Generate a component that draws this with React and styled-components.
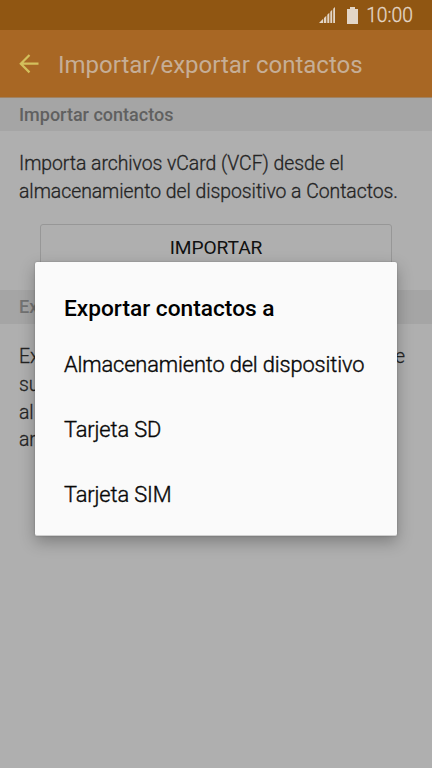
import React from 'react';
import styled, { createGlobalStyle } from 'styled-components';

const GlobalStyle = createGlobalStyle`
  * {
    box-sizing: border-box;
  }

  body {
    margin: 0;
    background-color: #afafaf;
    font-family: Roboto, 'Liberation Sans', sans-serif;
  }
`;

const Screen = styled.div`
  position: relative;
  height: 768px;
  overflow: hidden;
  background-color: #afafaf;
`;

const StatusBar = styled.div`
  display: flex;
  justify-content: flex-end;
  align-items: center;
  height: 30px;
  padding-right: 19px;
  background-color: #905612;
  color: #e3d6c7;
`;

const Clock = styled.span`
  margin-left: 8px;
  padding-top: 2px;
  font-size: 19.3px;
  font-weight: 300;
  line-height: 30px;
  -webkit-text-stroke: 0.3px currentColor;
`;

const SignalIcon = styled.svg`
  width: 17px;
  height: 17px;
  margin-right: 11px;
`;

const BatteryIcon = styled.svg`
  width: 11px;
  height: 17px;
`;

const Header = styled.header`
  display: flex;
  align-items: center;
  height: 68px;
  padding-left: 19px;
  background-color: #a86724;
  border-bottom: 1px solid #a08262;
`;

const BackIcon = styled.svg`
  width: 20px;
  height: 20px;
  margin-right: 19px;
`;

const Title = styled.h1`
  margin: 2px 0 0;
  color: #c6ae96;
  font-size: 24px;
  font-weight: 400;
  white-space: nowrap;
`;

const SectionTitle = styled.h2`
  height: ${(props) => props.$height}px;
  margin: 0;
  padding-left: 19px;
  background-color: #a5a5a5;
  color: ${(props) => props.$color};
  font-size: 18px;
  font-weight: 500;
  line-height: ${(props) => props.$height}px;
`;

const Section = styled.section`
  height: ${(props) => props.$height};
  padding: 19px 0 0 19px;
`;

const Text = styled.p`
  margin: 0;
  color: #242424;
  font-size: 19.4px;
  font-weight: 300;
  letter-spacing: -0.04px;
  line-height: 27.8px;
  white-space: nowrap;
  -webkit-text-stroke: 0.3px currentColor;
`;

const FullLine = styled.span`
  display: block;
  width: 386px;
  white-space: normal;
  text-align: justify;
  text-align-last: justify;
`;

const ImportButton = styled.button`
  display: block;
  width: 352px;
  height: 46px;
  margin: 18px 0 0 21px;
  padding: 2px 0 0;
  border: 1px solid #979797;
  border-radius: 3px;
  background: none;
  color: #111;
  font-family: inherit;
  font-size: 19.2px;
  letter-spacing: -0.1px;
`;

const Dialog = styled.div`
  position: absolute;
  top: 262px;
  left: 35px;
  width: 362px;
  height: 274px;
  padding: 28px 0 0 29px;
  border-bottom: 1px solid #cfcfcf;
  border-radius: 2px;
  background-color: #fafafa;
  box-shadow: 0 0 2px rgba(0, 0, 0, 0.25), 0 6px 16px rgba(0, 0, 0, 0.28);
`;

const DialogTitle = styled.h2`
  margin: 0;
  color: #000;
  font-size: 22.7px;
  font-weight: 500;
  line-height: 38px;
`;

const OptionList = styled.ul`
  margin: 5px 0 0;
  padding: 0;
  list-style: none;
`;

const Option = styled.li`
  height: 65px;
  color: #080808;
  font-size: 21.8px;
  font-weight: 300;
  letter-spacing: -0.12px;
  line-height: 64px;
  white-space: nowrap;
  -webkit-text-stroke: 0.4px currentColor;
`;

const options = ['Almacenamiento del dispositivo', 'Tarjeta SD', 'Tarjeta SIM'];

function App() {
  return (
    <Screen>
      <GlobalStyle />
      <StatusBar>
        <SignalIcon viewBox="0 0 17 17" fill="currentColor">
          <path d="M0 16L4.2 11.8V16ZM5 11L7.3 8.7V16H5ZM8.3 7.7L10.3 5.7V16H8.3ZM11.3 4.7L13.2 2.8V16H11.3ZM14.2 1.8L16 0V16H14.2Z" />
        </SignalIcon>
        <BatteryIcon viewBox="0 0 11 17" fill="currentColor">
          <path d="M3 0H8V2H11V17H0V2H3Z" />
        </BatteryIcon>
        <Clock>10:00</Clock>
      </StatusBar>
      <Header>
        <BackIcon viewBox="0 0 20 20" fill="none" stroke="#d3c05c" strokeWidth="2.2">
          <path d="M10.5 1L1.8 9.7L10.5 18.4M2 9.7H19.5" />
        </BackIcon>
        <Title>Importar/exportar contactos</Title>
      </Header>
      <SectionTitle $height={33} $color="#606060">Importar contactos</SectionTitle>
      <Section $height="159px">
        <Text>
          Importa archivos vCard (VCF) desde el
          <br />
          almacenamiento del dispositivo a Contactos.
        </Text>
        <ImportButton type="button">IMPORTAR</ImportButton>
      </Section>
      <SectionTitle $height={34} $color="#727272">Exportar contactos</SectionTitle>
      <Section $height="auto">
        <Text>
          <FullLine>Exporta los contactos del dispositivo desde</FullLine>
          su memoria
          <br />
          al almacenamiento como
          <br />
          archivos vCard.
        </Text>
      </Section>
      <Dialog role="dialog">
        <DialogTitle>Exportar contactos a</DialogTitle>
        <OptionList>
          {options.map((option) => (
            <Option key={option}>{option}</Option>
          ))}
        </OptionList>
      </Dialog>
    </Screen>
  );
}

export default App;
